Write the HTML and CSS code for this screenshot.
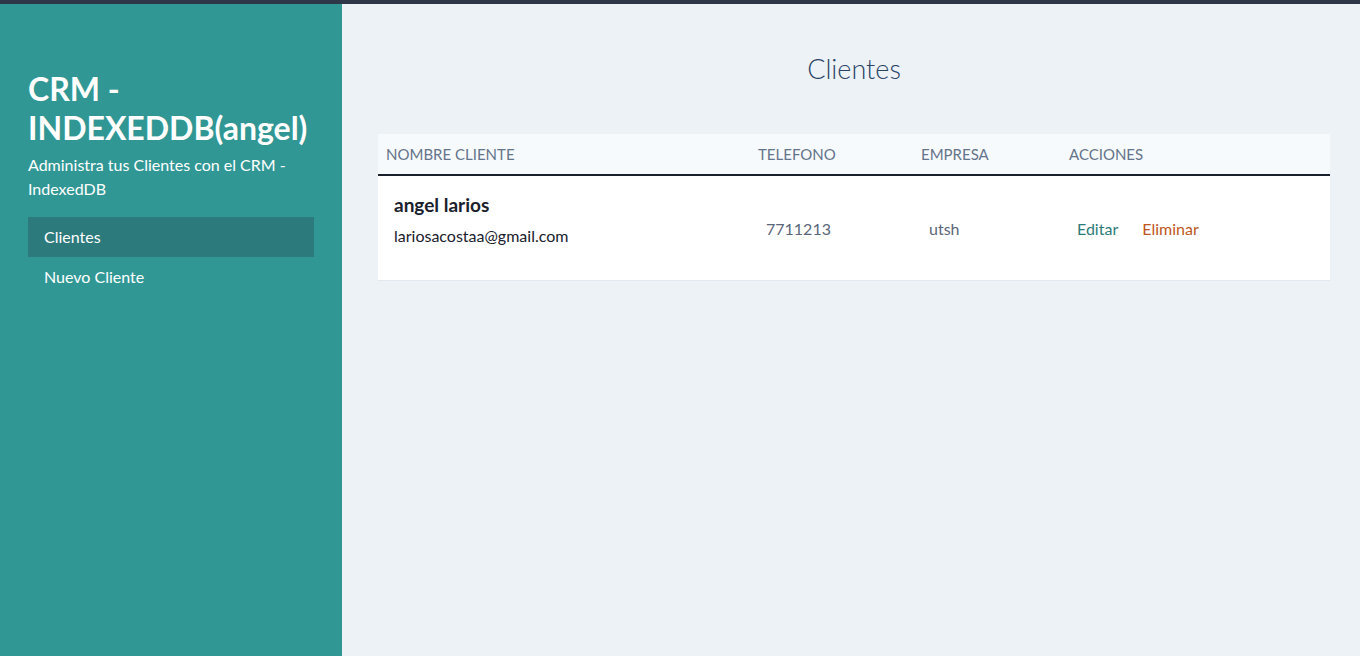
FILE: index.html
```html
<!DOCTYPE html>
<html lang="es">
<head>
<meta charset="utf-8">
<title>CRM - IndexedDB</title>
<link rel="stylesheet" href="styles.css">
</head>
<body>
<div class="topbar"></div>
<div class="layout">
  <aside class="sidebar">
    <h1 class="brand">CRM - INDEXEDDB(angel)</h1>
    <p class="tagline">Administra tus Clientes con el CRM - IndexedDB</p>
    <nav class="nav">
      <a class="nav-link active" href="#">Clientes</a>
      <a class="nav-link" href="#">Nuevo Cliente</a>
    </nav>
  </aside>
  <main class="main">
    <h2 class="page-title">Clientes</h2>
    <table class="clients">
      <thead>
        <tr>
          <th class="col-name">Nombre Cliente</th>
          <th class="col-phone">Telefono</th>
          <th class="col-company">Empresa</th>
          <th class="col-actions">Acciones</th>
        </tr>
      </thead>
      <tbody>
        <tr>
          <td class="cell-name">
            <p class="client-name">angel larios</p>
            <p class="client-email">lariosacostaa@gmail.com</p>
          </td>
          <td class="cell-muted">7711213</td>
          <td class="cell-muted">utsh</td>
          <td class="cell-actions">
            <a class="btn-edit" href="#">Editar</a>
            <a class="btn-delete" href="#">Eliminar</a>
          </td>
        </tr>
      </tbody>
    </table>
  </main>
</div>
</body>
</html>
```

FILE: styles.css
```css
* { box-sizing: border-box; }
html, body { margin: 0; padding: 0; height: 100%; }
body {
  font-family: "Lato", "Open Sans", sans-serif;
  background: #edf2f7;
  color: #1a202c;
}
.topbar { height: 4px; background: #2d3748; }
.layout { display: flex; min-height: calc(100vh - 4px); }
.sidebar {
  width: 342px;
  flex: none;
  background: #319795;
  padding: 65px 28px 28px;
  color: #fff;
}
.brand {
  margin: 0;
  font-size: 32px;
  line-height: 39px;
  font-weight: 700;
  color: #fff;
}
.tagline {
  margin: 6px 0 0;
  font-size: 16px;
  line-height: 24px;
}
.nav { margin-top: 16px; display: flex; flex-direction: column; }
.nav-link {
  display: block;
  padding: 8px 16px;
  font-size: 16px;
  line-height: 24px;
  color: #fff;
  text-decoration: none;
}
.nav-link.active { background: #2c7a7b; }
.main { flex: 1; padding: 47px 30px 40px 36px; }
.page-title {
  margin: 0;
  text-align: center;
  font-size: 27px;
  line-height: 36px;
  font-weight: 300;
  color: #2a4365;
}
.clients {
  margin-top: 47px;
  width: 952px;
  border-collapse: collapse;
  background: #fff;
}
.clients th {
  background: #f7fafc;
  text-align: left;
  font-weight: 400;
  font-size: 15px;
  line-height: 20px;
  color: #64748b;
  text-transform: uppercase;
  padding: 10px 8px;
  border-bottom: 2px solid #1a202c;
}
.col-name { width: 372px; }
.col-phone { width: 163px; }
.col-company { width: 148px; }
.clients td {
  padding: 16px;
  border-bottom: 1px solid #e2e8f0;
  vertical-align: middle;
}
.cell-name { padding: 15px 16px 32px !important; }
.client-name { margin: 0; font-size: 19px; line-height: 28px; font-weight: 700; color: #1a202c; }
.client-email { margin: 5px 0 0; font-size: 16px; line-height: 24px; color: #1a202c; }
.cell-muted { font-size: 16px; color: #596579; }
.cell-actions { font-size: 16px; }
.btn-edit { color: #2c7a7b; text-decoration: none; margin-right: 20px; }
.btn-delete { color: #c05621; text-decoration: none; }
```
